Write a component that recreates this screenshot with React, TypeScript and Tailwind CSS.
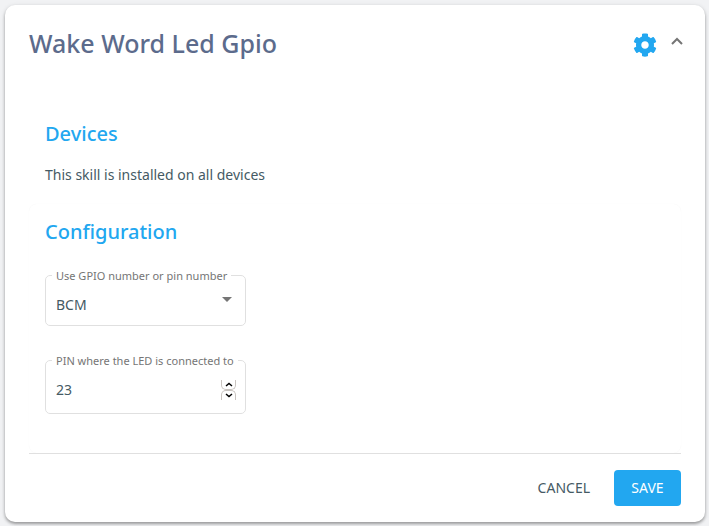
import { ChangeEvent, useState } from 'react';
import { FaCog } from 'react-icons/fa';

function Stepper({ onStep }: { onStep: (delta: number) => void }) {
  return (
    <div className="flex w-[15px] flex-col">
      <button type="button" aria-label="Increase" onClick={() => onStep(1)} className="flex h-[10px] items-center justify-center rounded-b-[5px] border border-t-0 border-[#c9c4c0]">
        <svg viewBox="0 0 8 5" className="h-[5px] w-2 fill-none stroke-black" strokeWidth="1.5"><path d="M1 4 4 1.500 7 4" /></svg>
      </button>
      <button type="button" aria-label="Decrease" onClick={() => onStep(-1)} className="flex h-[10px] items-center justify-center rounded-t-[5px] border border-b-0 border-[#c9c4c0]">
        <svg viewBox="0 0 8 5" className="h-[5px] w-2 fill-none stroke-black" strokeWidth="1.5"><path d="M1 1 4 3.500 7 1" /></svg>
      </button>
    </div>
  );
}

export default function App() {
  const [mode, setMode] = useState('BCM');
  const [pin, setPin] = useState(23);

  return (
    <main className="min-h-screen bg-[#f1f2f4] py-[5px] pr-1 pb-1 pl-[5px] font-['Noto_Sans',sans-serif] text-sm text-[#455a64]">
      <section className="rounded-[10px] bg-white px-6 pb-4 shadow-[0_2px_3px_rgba(0,0,0,0.3),0_1px_5px_rgba(0,0,0,0.12)]">
        <header className="flex h-20 items-center justify-between">
          <h1 className="pb-1 text-[25px] leading-8 font-medium text-[#5c6b8c]">Wake Word Led Gpio</h1>
          <div className="flex items-center gap-[14px]">
            <FaCog className="size-6 text-[#22a7f0]" aria-hidden="true" />
            <button type="button" aria-label="Collapse" className="mb-2 -mr-[2px]">
              <svg viewBox="0 0 12 8" className="h-2 w-3 fill-none stroke-[#757575] stroke-2"><path d="M1 7 6 2l5 5" /></svg>
            </button>
          </div>
        </header>

        <section className="mt-[21px] h-[98px] px-4 pt-4">
          <h2 className="text-xl leading-6 font-medium text-[#22a7f0]">Devices</h2>
          <p className="mt-[19px] leading-5">This skill is installed on all devices</p>
        </section>

        <section className="rounded-lg px-4 pt-4 pb-[39px] shadow-[0_0_1px_rgba(0,0,0,0.06)]">
          <h2 className="text-xl leading-6 font-medium text-[#22a7f0]">Configuration</h2>
          <fieldset className="mt-[22px] w-[201px] rounded-[5px] border border-[#e0e0e0] px-[6px]">
            <legend className="px-1 pt-[2px] text-[11px] leading-4 text-[#757575]">
              <label htmlFor="mode">Use GPIO number or pin number</label>
            </legend>
            <div className="flex h-[41px] items-center">
              <select
                id="mode"
                value={mode}
                onChange={(e: ChangeEvent<HTMLSelectElement>) => setMode(e.target.value)}
                className="w-full appearance-none bg-transparent pl-1 outline-none"
              >
                <option>BCM</option>
                <option>BOARD</option>
              </select>
              <svg viewBox="0 0 10 5" className="pointer-events-none mr-[7px] mb-[10px] -ml-[17px] h-[5px] w-[10px] shrink-0 fill-[#757575]"><path d="M0 0h10L5 5z" /></svg>
            </div>
          </fieldset>
          <fieldset className="mt-[25px] w-[201px] rounded-[5px] border border-[#e0e0e0] px-[6px]">
            <legend className="px-1 pt-[2px] text-[11px] leading-4 text-[#757575]">
              <label htmlFor="pin">PIN where the LED is connected to</label>
            </legend>
            <div className="flex h-[44px] items-center justify-between pr-[3px] pb-[2px]">
              <input
                id="pin"
                inputMode="numeric"
                value={pin}
                onChange={(e: ChangeEvent<HTMLInputElement>) => setPin(Number(e.target.value) || 0)}
                className="w-32 bg-transparent pl-1 outline-none"
              />
              <Stepper onStep={(delta) => setPin(pin + delta)} />
            </div>
          </fieldset>
        </section>

        <footer className="flex justify-end gap-2 border-t border-[#e0e0e0] pt-4">
          <button type="button" className="h-9 px-4">CANCEL</button>
          <button type="button" className="h-9 w-[67px] rounded bg-[#22a7f0] text-white">SAVE</button>
        </footer>
      </section>
    </main>
  );
}
